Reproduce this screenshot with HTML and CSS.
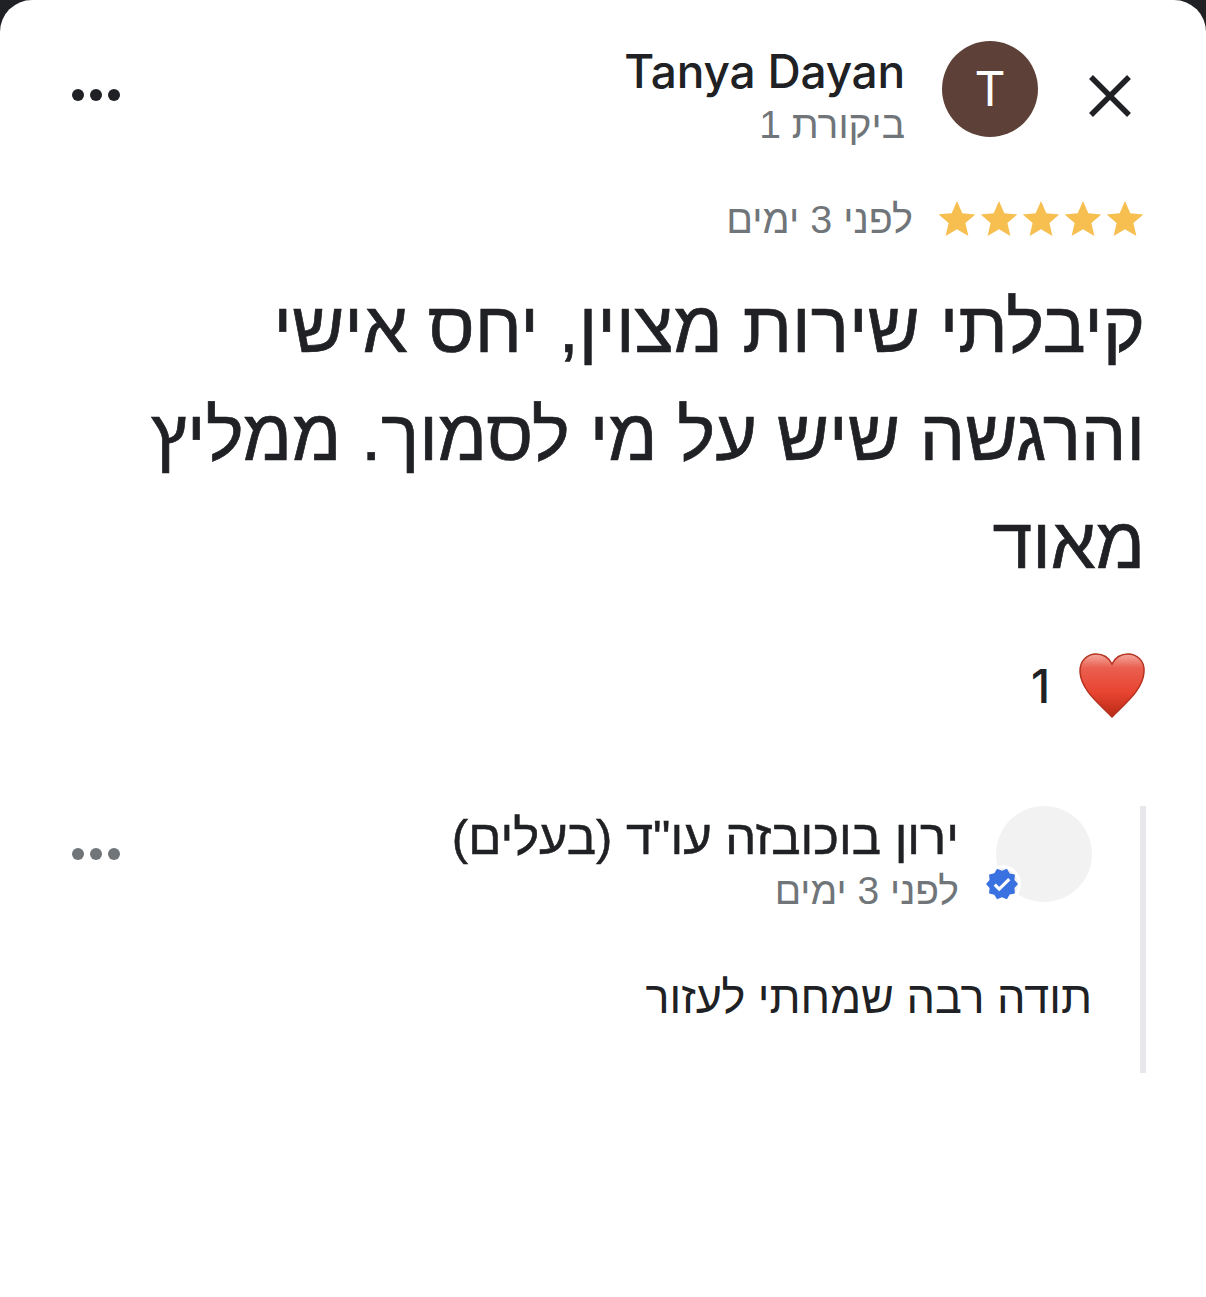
FILE: index.html
```html
<!DOCTYPE html>
<html lang="he" dir="rtl">
<head>
<meta charset="utf-8">
<title>ביקורת</title>
<link rel="stylesheet" href="styles.css">
</head>
<body>
<div class="sheet">

  <div class="head">
    <button class="close" aria-label="סגירה">
      <svg width="44" height="44" viewBox="0 0 44 44"><path d="M3 3L41 41M41 3L3 41" stroke="#202124" stroke-width="5.500" fill="none"/></svg>
    </button>
    <div class="avatar">T</div>
    <div class="who">
      <div class="name">Tanya Dayan</div>
      <div class="sub">ביקורת 1</div>
    </div>
    <div class="dots"><i></i><i></i><i></i></div>
  </div>

  <div class="rating">
    <svg class="stars" width="206" height="36" viewBox="0 0 206 36" fill="#f6bf4f">
      <path id="s" d="M18 0l5.300 12.200 13 1.200-9.900 8.700 3 13L18 28.200 6.600 35.100l3-13L-.3 13.400l13-1.200z"/>
      <use href="#s" x="42"/><use href="#s" x="84"/><use href="#s" x="126"/><use href="#s" x="168"/>
    </svg>
    <span class="ago">לפני 3 ימים</span>
  </div>

  <p class="review">קיבלתי שירות מצוין, יחס אישי והרגשה שיש על מי לסמוך. ממליץ מאוד</p>

  <div class="reacts">
    <svg width="68" height="68" viewBox="0 0 68 68">
      <defs>
        <linearGradient id="heart" x1="0" y1="0" x2="0" y2="1">
          <stop offset="0" stop-color="#f3a99f"/>
          <stop offset=".22" stop-color="#ea5f4f"/>
          <stop offset=".6" stop-color="#e94532"/>
          <stop offset="1" stop-color="#b92a15"/>
        </linearGradient>
      </defs>
      <path d="M34 65C24 54 3 39 2 20 1.500 8 10 2 18 2c7 0 13 4 16 10 3-6 9-10 16-10 8 0 17 6 16 18-1 19-22 34-32 45z" fill="url(#heart)" stroke="#b5321f" stroke-width="1.500"/>
    </svg>
    <span class="count">1</span>
  </div>

  <div class="reply">
    <div class="reply-head">
      <div class="owner-pic">
        <svg class="badge" width="32" height="32" viewBox="1 1.500 22 21"><path d="M23 12l-2.440-2.790.34-3.690-3.610-.82-1.890-3.200L12 2.960 8.600 1.500 6.710 4.690 3.100 5.500l.34 3.700L1 12l2.440 2.790-.34 3.700 3.610.82L8.600 22.500l3.400-1.470 3.400 1.460 1.890-3.190 3.610-.82-.34-3.690L23 12z" fill="#3a71e0"/><path d="M7 12.400l3.100 3.100 6.900-6.900" stroke="#fff" stroke-width="2.200" fill="none"/></svg>
      </div>
      <div class="who">
        <div class="owner">ירון בוכובזה עו"ד (בעלים)</div>
        <div class="sub">לפני 3 ימים</div>
      </div>
      <div class="dots grey"><i></i><i></i><i></i></div>
    </div>
    <p class="reply-text">תודה רבה שמחתי לעזור</p>
  </div>

</div>
</body>
</html>
```

FILE: styles.css
```css
html, body {
  margin: 0;
  height: 100%;
  background: #202124;
}

body {
  font-family: "Liberation Sans", "Inter", sans-serif;
  color: #202124;
}

.sheet {
  height: 1297px;
  box-sizing: border-box;
  padding: 41px 60px 0 60px;
  background: #fff;
  border-radius: 32px 32px 0 0;
}

.head {
  display: flex;
  align-items: center;
  height: 96px;
}

.close {
  width: 44px;
  height: 44px;
  margin: 14px 14px 0 0;
  padding: 0;
  border: 0;
  background: none;
}

.avatar {
  width: 96px;
  height: 96px;
  margin-right: 50px;
  border-radius: 50%;
  background: #5d4037;
  color: #fff;
  font: 48px/96px "Inter", sans-serif;
  text-align: center;
}

.who {
  margin-right: 37px;
  padding-top: 11px;
}

.name {
  direction: ltr;
  text-align: right;
  font: 500 46px/60px "Inter", sans-serif;
  letter-spacing: -.2px;
}

.sub, .ago {
  color: #70757a;
  font-size: 39px;
  line-height: 48px;
}

.dots {
  display: flex;
  gap: 6px;
  margin-top: 12px;
  margin-right: auto;
  margin-left: 12px;
}
.dots i {
  width: 12px;
  height: 12px;
  border-radius: 50%;
  background: #202124;
}
.dots.grey i {
  background: #70757a;
}

.rating {
  display: flex;
  align-items: center;
  gap: 26px;
  margin-top: 58px;
  margin-right: 1px;
}
.ago {
  font-size: 39.500px;
}

.review {
  margin: 30px 1px 0 0;
  font-size: 71.600px;
  line-height: 108px;
  -webkit-text-stroke: .7px #202124;
}

.reacts {
  display: flex;
  align-items: center;
  gap: 28px;
  margin-top: 55px;
}
.count {
  font: 500 46px/68px "Inter", sans-serif;
}

.reply {
  height: 267px;
  margin-top: 86px;
  padding-right: 48px;
  border-right: 6px solid #e8e8ec;
}

.reply-head {
  display: flex;
  align-items: center;
  height: 96px;
}

.reply-head .who {
  padding-top: 13px;
}

.reply-head .dots {
  margin-top: 0;
}

.owner-pic {
  position: relative;
  width: 96px;
  height: 96px;
  border-radius: 50%;
  background: #f2f2f2;
}
.badge {
  position: absolute;
  left: -10px;
  bottom: 2px;
  border-radius: 50%;
  box-shadow: 0 0 0 3px #fff;
}

.owner {
  font-size: 49px;
  line-height: 60px;
  -webkit-text-stroke: .5px #202124;
}

.reply-text {
  margin: 66px 0 0 0;
  font-size: 45px;
  line-height: 60px;
}
```
